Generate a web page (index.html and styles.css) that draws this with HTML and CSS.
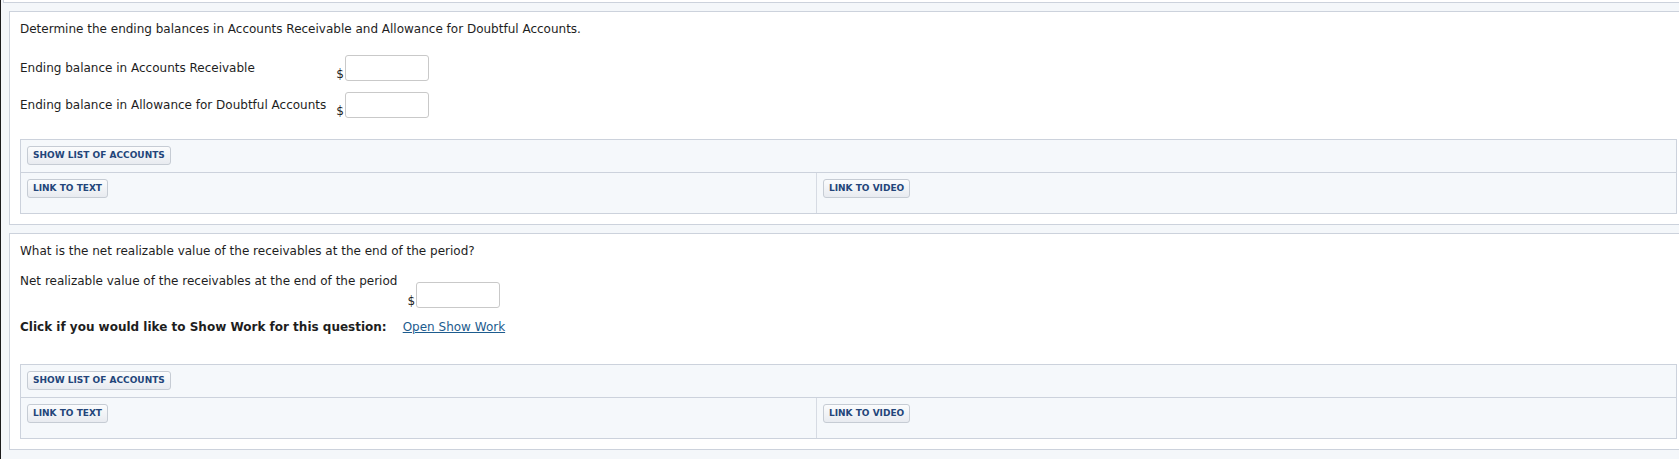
FILE: index.html
```html
<!DOCTYPE html>
<html lang="en">
<head>
<meta charset="utf-8">
<title>Receivables</title>
<link rel="stylesheet" href="styles.css">
</head>
<body>
<div class="page">
  <div class="prev-panel"></div>

  <section class="panel">
    <p class="question">Determine the ending balances in Accounts Receivable and Allowance for Doubtful Accounts.</p>
    <div class="fields">
      <div class="field-label">Ending balance in Accounts Receivable</div>
      <div class="field-input"><span class="dollar">$</span><input class="amount" type="text"></div>
      <div class="field-label">Ending balance in Allowance for Doubtful Accounts</div>
      <div class="field-input"><span class="dollar">$</span><input class="amount" type="text"></div>
    </div>
    <div class="tools">
      <div class="tools-top"><button class="tool-btn">SHOW LIST OF ACCOUNTS</button></div>
      <div class="tools-bottom">
        <div class="tools-cell tools-cell-left"><button class="tool-btn">LINK TO TEXT</button></div>
        <div class="tools-cell"><button class="tool-btn">LINK TO VIDEO</button></div>
      </div>
    </div>
  </section>

  <section class="panel">
    <p class="question">What is the net realizable value of the receivables at the end of the period?</p>
    <div class="fields fields-top">
      <div class="field-label">Net realizable value of the receivables at the end of the period</div>
      <div class="field-input field-input-low"><span class="dollar">$</span><input class="amount" type="text"></div>
    </div>
    <p class="show-work"><strong>Click if you would like to Show Work for this question:</strong><a class="work-link" href="#">Open Show Work</a></p>
    <div class="tools">
      <div class="tools-top"><button class="tool-btn">SHOW LIST OF ACCOUNTS</button></div>
      <div class="tools-bottom">
        <div class="tools-cell tools-cell-left"><button class="tool-btn">LINK TO TEXT</button></div>
        <div class="tools-cell"><button class="tool-btn">LINK TO VIDEO</button></div>
      </div>
    </div>
  </section>
</div>
</body>
</html>
```
FILE: styles.css
```css
html, body {
  margin: 0;
  padding: 0;
  overflow: hidden;
}

body {
  background: #f4f7fa;
  font-family: "DejaVu Sans", Verdana, sans-serif;
  font-size: 12px;
  line-height: 15px;
  color: #1e1e1e;
}

.page {
  border-left: 1px solid #1c1c1c;
  min-height: 459px;
}

.prev-panel {
  margin-left: 2px;
  width: 1700px;
  height: 2px;
  background: #ffffff;
  border-left: 1px solid #ccd2dc;
  border-bottom: 1px solid #ccd2dc;
}

.panel {
  margin: 8px 0 0 8px;
  width: 1679px;
  box-sizing: border-box;
  background: #ffffff;
  border: 1px solid #ccd2dc;
  padding: 10px;
}

.question {
  margin: 0;
}

.fields {
  display: grid;
  grid-template-columns: max-content max-content;
  row-gap: 11px;
  margin-top: 18px;
  align-items: center;
}

.field-label {
  padding-right: 10px;
}

.field-input {
  display: flex;
  align-items: flex-end;
}

.dollar {
  line-height: 13px;
  padding-right: 1px;
}

.amount {
  box-sizing: border-box;
  width: 84px;
  height: 26px;
  margin: 0;
  border: 1px solid #c9c9c9;
  border-radius: 3px;
  background: #ffffff;
  padding: 2px 4px;
  font: inherit;
}

.fields-top {
  margin-top: 15px;
  align-items: start;
}

.field-input-low {
  padding-top: 8px;
}

.show-work {
  margin: 12px 0 0 0;
}

.show-work strong {
  font-weight: bold;
}

.work-link {
  margin-left: 16px;
  color: #1d5c8e;
  text-decoration: underline;
}

.tools {
  margin-top: 21px;
  border: 1px solid #ccd2dc;
  background: #f5f8fb;
}

.panel .show-work + .tools {
  margin-top: 29px;
}

.tools-top {
  padding: 6px 6px 7px;
  border-bottom: 1px solid #ccd2dc;
}

.tools-bottom {
  display: grid;
  grid-template-columns: 796fr 859fr;
}

.tools-cell {
  padding: 6px 6px 15px;
}

.tools-cell-left {
  border-right: 1px solid #d6dbe3;
}

.tool-btn {
  display: block;
  box-sizing: border-box;
  height: 19px;
  margin: 0;
  padding: 0 5px;
  border: 1px solid #c6ccd4;
  border-radius: 3px;
  background: linear-gradient(#fbfcfd, #e8ebf0);
  font-family: "DejaVu Sans", Verdana, sans-serif;
  font-size: 9px;
  font-weight: bold;
  line-height: 17px;
  color: #23457a;
}
```
